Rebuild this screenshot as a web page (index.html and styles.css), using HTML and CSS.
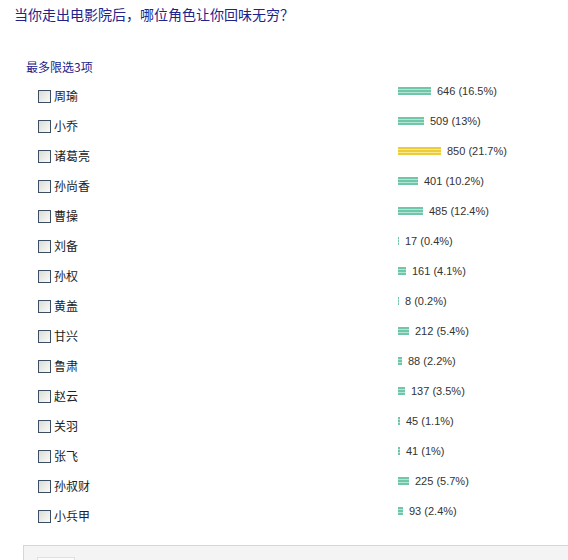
FILE: index.html
```html
<!DOCTYPE html>
<html lang="zh">
<head>
<meta charset="utf-8">
<link rel="stylesheet" href="styles.css">
</head>
<body>
<div class="poll">
  <h1 class="title">当你走出电影院后，哪位角色让你回味无穷？</h1>
  <div class="hint">最多限选3项</div>
  <div class="rows">
    <div class="row"><label class="opt"><span class="cb"></span>周瑜</label><div class="res"><span class="bar" style="width:33px"></span><span class="num">646 (16.5%)</span></div></div>
    <div class="row"><label class="opt"><span class="cb"></span>小乔</label><div class="res"><span class="bar" style="width:26px"></span><span class="num">509 (13%)</span></div></div>
    <div class="row"><label class="opt"><span class="cb"></span>诸葛亮</label><div class="res"><span class="bar top" style="width:43px"></span><span class="num">850 (21.7%)</span></div></div>
    <div class="row"><label class="opt"><span class="cb"></span>孙尚香</label><div class="res"><span class="bar" style="width:20px"></span><span class="num">401 (10.2%)</span></div></div>
    <div class="row"><label class="opt"><span class="cb"></span>曹操</label><div class="res"><span class="bar" style="width:25px"></span><span class="num">485 (12.4%)</span></div></div>
    <div class="row"><label class="opt"><span class="cb"></span>刘备</label><div class="res"><span class="bar" style="width:1px"></span><span class="num">17 (0.4%)</span></div></div>
    <div class="row"><label class="opt"><span class="cb"></span>孙权</label><div class="res"><span class="bar" style="width:8px"></span><span class="num">161 (4.1%)</span></div></div>
    <div class="row"><label class="opt"><span class="cb"></span>黄盖</label><div class="res"><span class="bar" style="width:1px"></span><span class="num">8 (0.2%)</span></div></div>
    <div class="row"><label class="opt"><span class="cb"></span>甘兴</label><div class="res"><span class="bar" style="width:11px"></span><span class="num">212 (5.4%)</span></div></div>
    <div class="row"><label class="opt"><span class="cb"></span>鲁肃</label><div class="res"><span class="bar" style="width:4px"></span><span class="num">88 (2.2%)</span></div></div>
    <div class="row"><label class="opt"><span class="cb"></span>赵云</label><div class="res"><span class="bar" style="width:7px"></span><span class="num">137 (3.5%)</span></div></div>
    <div class="row"><label class="opt"><span class="cb"></span>关羽</label><div class="res"><span class="bar" style="width:2px"></span><span class="num">45 (1.1%)</span></div></div>
    <div class="row"><label class="opt"><span class="cb"></span>张飞</label><div class="res"><span class="bar" style="width:2px"></span><span class="num">41 (1%)</span></div></div>
    <div class="row"><label class="opt"><span class="cb"></span>孙叔财</label><div class="res"><span class="bar" style="width:11px"></span><span class="num">225 (5.7%)</span></div></div>
    <div class="row"><label class="opt"><span class="cb"></span>小兵甲</label><div class="res"><span class="bar" style="width:5px"></span><span class="num">93 (2.4%)</span></div></div>
  </div>
  <div class="footer"><span class="btn"></span></div>
</div>
</body>
</html>
```
FILE: styles.css
```css
html, body { margin: 0; padding: 0; background: #fff; }
body { font-family: "Noto Sans CJK SC", "Liberation Sans", sans-serif; color: #222; overflow: hidden; }
.poll { padding: 4px 0 0 0; }
.title { margin: 0 0 0 14px; font-size: 14px; font-weight: normal; line-height: 20px; color: #22228c; }
.hint { margin: 34px 0 0 26px; font-size: 12px; line-height: 18px; color: #22228c; }
.rows { margin-top: 5px; }
.row { display: grid; grid-template-columns: 398px 1fr; height: 30px; align-items: center; }
.opt { display: flex; align-items: center; padding-left: 38px; font-size: 12px; line-height: 16px; color: #222; }
.cb { width: 11px; height: 11px; border: 1px solid #3c4e64; background: linear-gradient(135deg, #dcdcd6, #fafaf8); margin-right: 3px; box-sizing: content-box; }
.res { display: flex; align-items: center; margin-bottom: 10px; font-family: "Liberation Sans", sans-serif; font-size: 11px; color: #333; }
.bar { display: block; height: 8px; background: repeating-linear-gradient(to bottom, #6fc6aa 0, #6fc6aa 2px, #b4e4d2 2px, #b4e4d2 3px); margin-right: 6px; }
.bar.top { background: repeating-linear-gradient(to bottom, #eccb3c 0, #eccb3c 2px, #fbe98e 2px, #fbe98e 3px); }
.num { white-space: nowrap; }
.footer { margin: 14px 0 0 23px; height: 40px; border: 1px solid #d6d6d6; border-right: none; background: #f4f4f4; }
.btn { display: block; margin: 11px 0 0 13px; width: 36px; height: 22px; border: 1px solid #e0e0e0; border-bottom: none; background: #fbfbfb; }
```
